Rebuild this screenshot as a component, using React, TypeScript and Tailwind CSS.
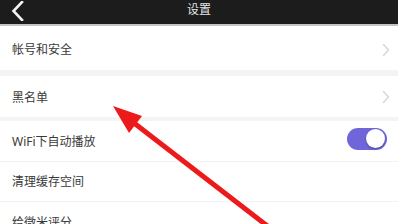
import React from "react";

const font = { fontFamily: '"Noto Sans", "Noto Sans CJK SC", sans-serif' };

function Chevron() {
  return (
    <svg width="8" height="14" viewBox="0 0 8 14" className="shrink-0">
      <path d="M1.5 1.5 L6.5 7 L1.5 12.5" fill="none" stroke="#d6d6d6" strokeWidth="1.4" strokeLinecap="round" strokeLinejoin="round" />
    </svg>
  );
}

function Toggle() {
  return (
    <div className="w-[40px] h-[22px] rounded-full bg-[#6e66d9] flex items-center justify-end pr-[2px]">
      <div className="w-[19px] h-[19px] rounded-full bg-white shadow-[0_1px_2px_rgba(0,0,0,0.3)]" />
    </div>
  );
}

export default function App() {
  return (
    <div className="relative w-[398px] h-[224px] overflow-hidden bg-white" style={font}>
      {/* header */}
      <div className="relative h-[24px] bg-[#1c1c1c] flex items-center justify-center">
        <svg className="absolute left-[11px] top-[1px]" width="14" height="20" viewBox="0 0 14 20">
          <path d="M11 1 L2.5 10 L11 19" fill="none" stroke="#f2f2f2" strokeWidth="2.6" strokeLinecap="square" />
        </svg>
        <span className="text-[12px] leading-none text-[#e6e6e6] -mt-[4px]">设置</span>
      </div>
      <div className="h-[2px] bg-[#c4c4c4]" />

      <div className="h-[44px] flex items-center justify-between pl-[12px] pr-[8px]">
        <span className="text-[12px] text-[#3a3a3a] mt-[4px]">帐号和安全</span>
        <div className="mt-[4px]">
          <Chevron />
        </div>
      </div>
      <div className="h-[6px] bg-[#f4f4f4]" />
      <div className="h-[41px] flex items-center justify-between pl-[12px] pr-[8px]">
        <span className="text-[12px] text-[#3a3a3a] mt-[2px]">黑名单</span>
        <Chevron />
      </div>
      <div className="h-[4px] bg-[#f4f4f4]" />

      <div className="h-[41px] flex items-center justify-between pl-[12px] pr-[11px] border-b border-[#f3f3f3]">
        <span className="text-[12px] text-[#3a3a3a] mt-[2px]">WiFi下自动播放</span>
        <div className="-mt-[5px]">
          <Toggle />
        </div>
      </div>
      <div className="h-[40px] flex items-center pl-[12px] border-b border-[#f3f3f3]">
        <span className="text-[12px] text-[#3a3a3a] mt-[1px]">清理缓存空间</span>
      </div>
      <div className="h-[40px] flex items-center pl-[12px]">
        <span className="text-[12px] text-[#3a3a3a] mt-[1px]">给微米评分</span>
      </div>

      {/* annotation arrow */}
      <svg className="absolute left-0 top-0 pointer-events-none" width="398" height="224" viewBox="0 0 398 224">
        <line x1="134" y1="123" x2="270" y2="228" stroke="#ec1a1a" strokeWidth="5" />
        <polygon points="113,106 142,116 129,133" fill="#ec1a1a" />
      </svg>
    </div>
  );
}
